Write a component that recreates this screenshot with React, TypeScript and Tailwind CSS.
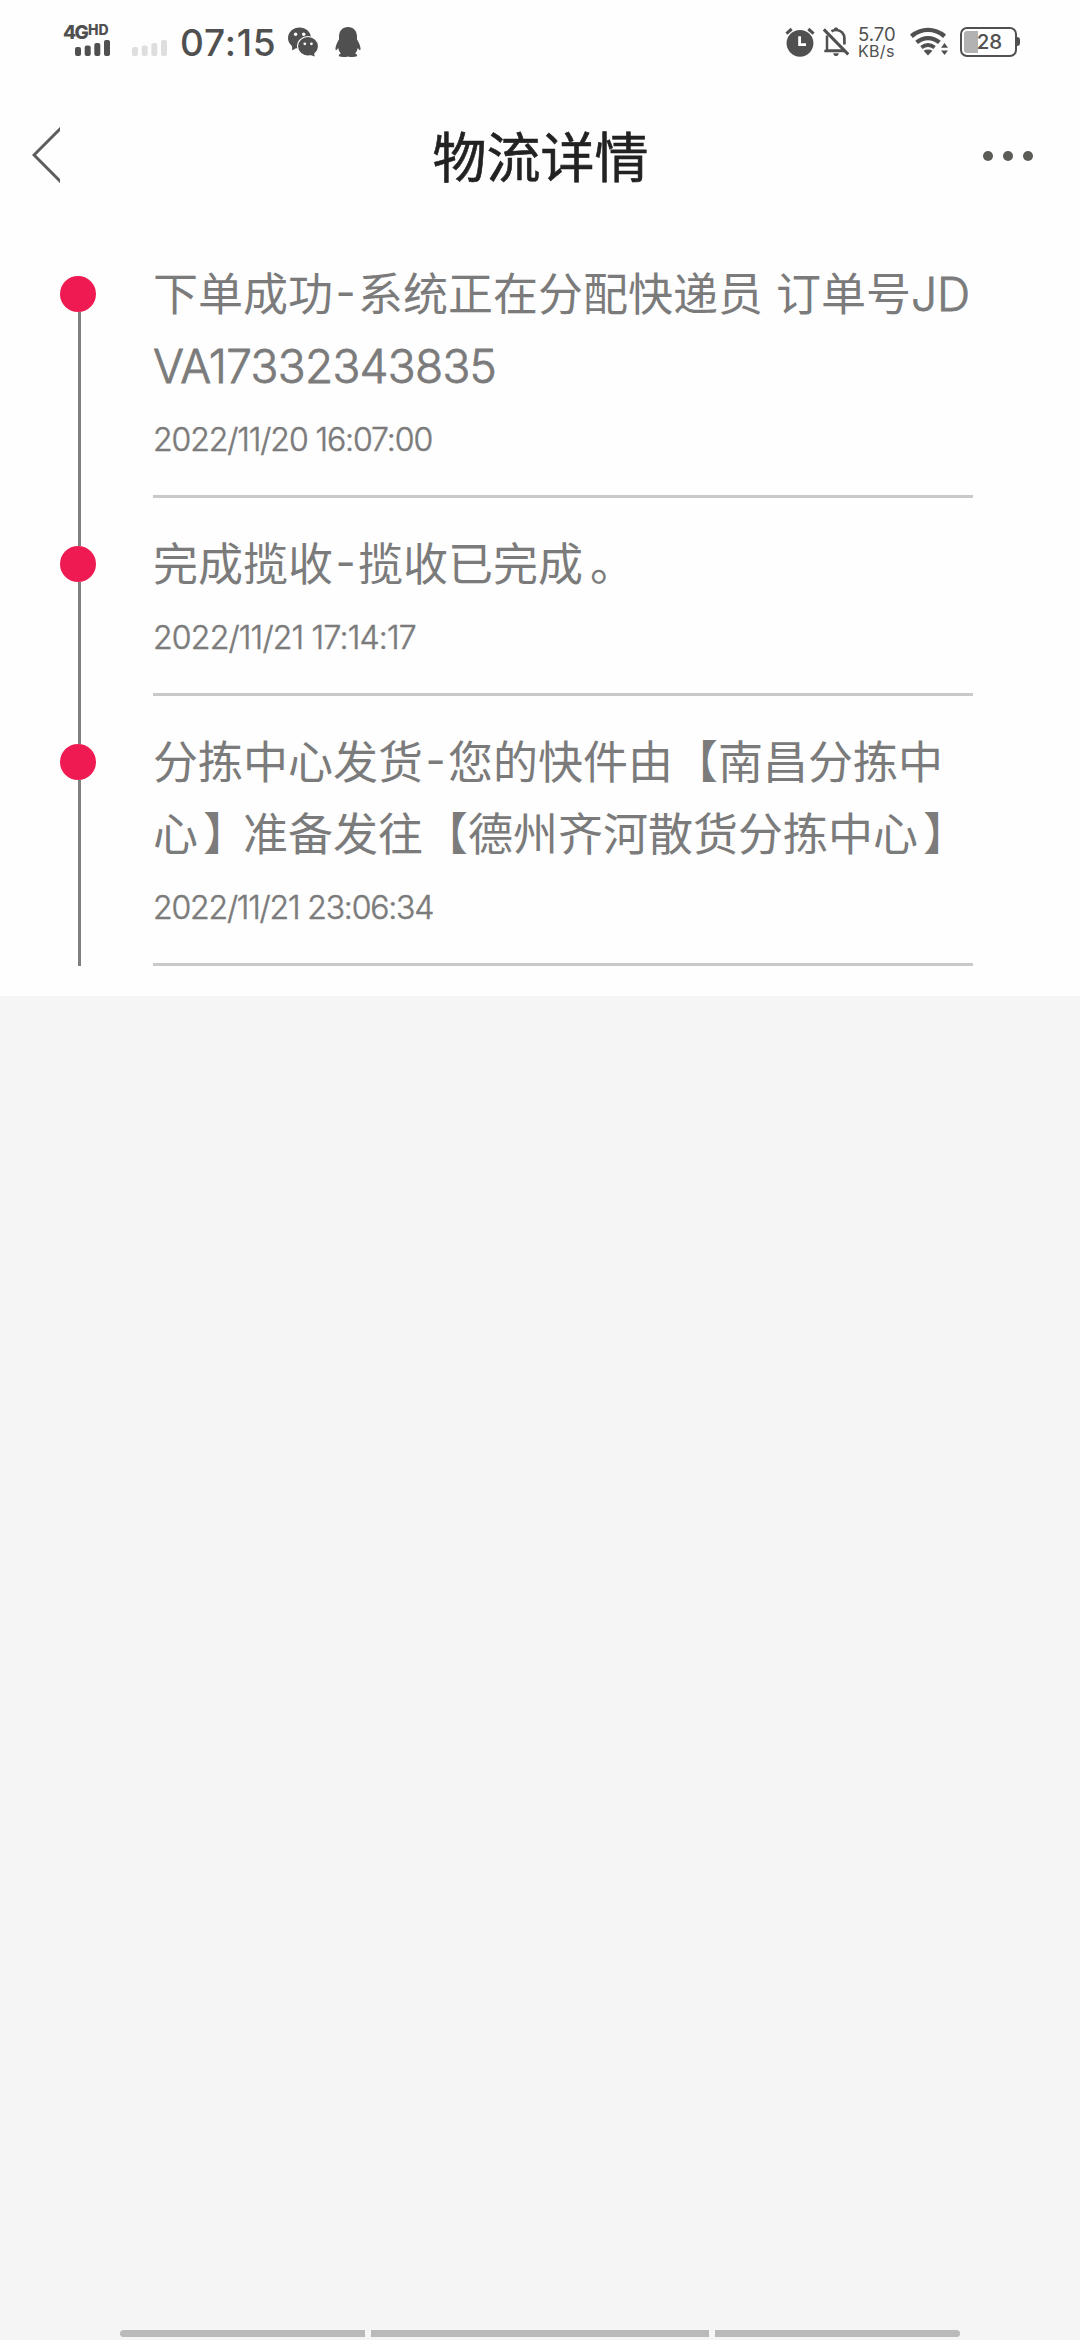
import React from 'react';

interface Segment {
  text: string;
  className?: string;
}

interface TrackRecord {
  lines: Segment[][];
  time: string;
  timeClass: string;
}

const HYPHEN: Segment = {
  text: '-',
  className: 'inline-block h-[72px] w-[25px] text-center align-top font-[Inter] text-[44px]',
};

const records: TrackRecord[] = [
  {
    lines: [
      [
        { text: '下单成功' },
        HYPHEN,
        { text: '系统正在分配快递员' },
        { text: ' ', className: 'inline-block w-[13px]' },
        { text: '订单号' },
        { text: 'JD', className: 'font-[Inter] text-[46px] font-light [-webkit-text-stroke:0.8px_#7b7b7b]' },
      ],
      [
        {
          text: 'VA17332343835',
          className: 'font-[Inter] text-[46px] font-light tracking-[-0.7px] [-webkit-text-stroke:0.8px_#7b7b7b]',
        },
      ],
    ],
    time: '2022/11/20 16:07:00',
    timeClass: 'tracking-[-1.1px]',
  },
  {
    lines: [[{ text: '完成揽收' }, HYPHEN, { text: '揽收已完成' }, { text: '。', className: 'ml-[7px]' }]],
    time: '2022/11/21 17:14:17',
    timeClass: 'tracking-[-0.8px]',
  },
  {
    lines: [
      [{ text: '分拣中心发货' }, HYPHEN, { text: '您的快件由【南昌分拣中' }],
      [
        { text: '心' },
        { text: '】', className: 'ml-[5px] tracking-[-5px]' },
        { text: '准备发往【德州齐河散货分拣中心' },
        { text: '】', className: 'ml-[5px] tracking-[-5px]' },
      ],
    ],
    time: '2022/11/21 23:06:34',
    timeClass: 'tracking-[-1.2px]',
  },
];

const SignalBars: React.FC<{ className?: string }> = ({ className }) => (
  <svg viewBox="0 0 35 16" className={className} fill="currentColor">
    <rect x="0" y="7" width="6" height="9" rx="2" />
    <rect x="9.7" y="5.5" width="6" height="10.5" rx="2" />
    <rect x="19.3" y="3" width="6" height="13" rx="2" />
    <rect x="29" y="0" width="6" height="16" rx="2" />
  </svg>
);

const WechatIcon = () => (
  <svg viewBox="0 0 30 30" className="h-[30px] w-[30px]">
    <ellipse cx="11.5" cy="11" rx="11.5" ry="10.6" fill="#505050" />
    <path d="M4 18L4.2 23.5L10 20Z" fill="#505050" />
    <circle cx="7.6" cy="7.2" r="1.7" fill="#fff" />
    <circle cx="15.7" cy="7.2" r="1.7" fill="#fff" />
    <ellipse cx="20" cy="19.3" rx="11" ry="10.4" fill="#fff" />
    <ellipse cx="20" cy="19.3" rx="9.9" ry="9.2" fill="#505050" />
    <path d="M21 27.5L26.7 29.6L26 25Z" fill="#505050" />
    <circle cx="16.8" cy="16.8" r="1.4" fill="#fff" />
    <circle cx="23.4" cy="16.8" r="1.4" fill="#fff" />
  </svg>
);

const QQIcon = () => (
  <svg viewBox="0 0 26 30" className="h-[30px] w-[26px]" fill="#505050">
    <path d="M13 0C7.5 0 4 4 4 9.5V12.5C2.3 15.2 .8 18.4 .5 21.2C.3 23.3 1.1 23.8 2.2 22.3L3.2 20.9C3.6 23 4.5 24.7 5.8 26.4C4.4 27 3.8 27.8 3.8 28.6C3.8 29.6 5.5 30 8 30C10.2 30 12 29.8 13 29.4C14 29.8 15.8 30 18 30C20.5 30 22.2 29.6 22.2 28.6C22.2 27.8 21.6 27 20.2 26.4C21.5 24.7 22.4 23 22.8 20.9L23.8 22.3C24.9 23.8 25.7 23.3 25.5 21.2C25.2 18.4 23.7 15.2 22 12.5V9.5C22 4 18.5 0 13 0Z" />
  </svg>
);

const AlarmIcon = () => (
  <svg viewBox="0 0 30 30" className="h-[30px] w-[30px]" fill="none">
    <circle cx="15" cy="16.3" r="13.4" fill="#505050" />
    <path d="M1.4 6.6L6.7 2M23.3 2L28.6 6.6" stroke="#505050" strokeWidth="3" />
    <path d="M14.6 9.3V17.6H21" stroke="#fff" strokeWidth="2.8" />
  </svg>
);

const BellOffIcon = () => (
  <svg viewBox="0 0 26 30" className="h-[30px] w-[26px]" fill="none" stroke="#505050">
    <path d="M.8 2.4L25.2 27.4" strokeWidth="3" />
    <path d="M4 8.5V23.6H19.5M1.3 23.9H21" strokeWidth="2.5" />
    <path d="M8.5 4.3C10 3.3 11.5 3 13 3C18 3 21.4 6.6 21.4 11.5V17.5" strokeWidth="2.7" />
    <path d="M10.2 26.3H15.8C15.5 28.2 14.6 29.1 13 29.1C11.4 29.1 10.5 28.2 10.2 26.3Z" fill="#505050" stroke="none" />
    <path d="M10.8 3C11 1 11.6 .5 13 .5C14.4 .5 15 1 15.2 3Z" fill="#505050" stroke="none" />
  </svg>
);

const WifiIcon = () => (
  <svg viewBox="0 0 38 30" className="h-[30px] w-[38px]" fill="none" stroke="#505050">
    <path d="M1.4 9.2C11.5 .8 24.5 .8 34.6 9.2" strokeWidth="4.4" />
    <path d="M6.6 15.3C13.5 9.6 22.5 9.6 29.4 15.3" strokeWidth="4.2" />
    <path d="M11.4 20.5C15.5 17.3 20.5 17.3 24.6 20.5" strokeWidth="3.8" />
    <path d="M13.6 23.8C16.2 22 19.8 22 22.4 23.8L18 28.6Z" fill="#505050" stroke="none" />
    <path d="M31 20.7L34.5 16L38 20.7ZM31 23.4H38L34.5 28Z" fill="#505050" stroke="none" />
  </svg>
);

const StatusBar = () => (
  <div className="flex h-[84px] items-start pl-[63px] pr-[60px] pt-[27px] font-[Inter] text-[#505050]">
    <div className="-mt-[2px] h-[31px] w-[47px]">
      <div className="flex h-[15px] items-start">
        <span className="w-[25px] text-[19px] leading-[16px] font-extrabold tracking-[-1.6px]">4G</span>
        <span className="text-[14px] leading-[10px] font-extrabold">HD</span>
      </div>
      <SignalBars className="ml-3 h-4 w-[35px]" />
    </div>
    <SignalBars className="ml-[22px] mt-[13px] h-4 w-[35px] text-[#dedede]" />
    <span className="ml-[13px] w-[108px] text-[37px] leading-[31px] font-medium tracking-[0.8px]">07:15</span>
    <WechatIcon />
    <div className="ml-[17px]">
      <QQIcon />
    </div>
    <div className="ml-auto flex items-start">
      <AlarmIcon />
      <div className="ml-2">
        <BellOffIcon />
      </div>
      <div className="ml-[9px] flex w-[38px] flex-col">
        <span className="text-[18.5px] leading-[15px]">5.70</span>
        <span className="text-[16px] leading-[18px] tracking-[0.3px]">KB/s</span>
      </div>
      <div className="ml-[14px]">
        <WifiIcon />
      </div>
      <div className="relative ml-3 flex h-[30px] w-[57px] items-center justify-center rounded-[7px] border-[2.5px] border-[#505050]">
        <div className="absolute left-[2px] top-[2px] h-[22px] w-[14px] rounded-l-[3px] bg-[#b2b2b2]" />
        <span className="relative pl-[2px] text-[20.5px] leading-[24px] font-medium">28</span>
      </div>
      <div className="mt-[10px] h-[9px] w-[3px] rounded-r-sm bg-[#505050]" />
    </div>
  </div>
);

const NavBar = () => (
  <div className="flex h-[150px] items-start justify-between pl-8 pr-[47px]">
    <svg viewBox="0 0 28 56" className="mt-[43px] h-14 w-7" fill="none" stroke="#5c5c5c" strokeWidth="3">
      <path d="M30 0L2 28L30 56" />
    </svg>
    <h1 className="ml-[38px] mt-[35px] text-[54px] leading-[72px] font-normal text-[#222] [-webkit-text-stroke:0.6px_#222]">物流详情</h1>
    <div className="mt-[67px] flex gap-[10px]">
      <span className="h-[10px] w-[10px] rounded-full bg-[#5b5c56]" />
      <span className="h-[10px] w-[10px] rounded-full bg-[#5b5c56]" />
      <span className="h-[10px] w-[10px] rounded-full bg-[#5b5c56]" />
    </div>
  </div>
);

const TimelineItem: React.FC<{ record: TrackRecord; first: boolean; last: boolean }> = ({ record, first, last }) => (
  <li className="flex">
    <div className="flex w-[153px] flex-col pl-[60px]">
      <div className={first ? 'ml-[18px] h-[18px] w-[3px]' : 'ml-[18px] h-[18px] w-[3px] bg-[#808080]'} />
      <div className="h-9 w-9 rounded-full bg-[#ee1a51]" />
      <div className={last ? 'mb-[30px] ml-[18px] w-[3px] flex-1 bg-[#808080]' : 'ml-[18px] w-[3px] flex-1 bg-[#808080]'} />
    </div>
    <div className="-mt-[2px] mb-[30px] w-[820px] border-b-[3px] border-[#c9c9c9] text-[#7b7b7b]">
      {record.lines.map((line, i) => (
        <p key={i} className="h-[72px] text-[45px] leading-[72px] whitespace-pre">
          {line.map((segment, j) => (
            <span key={j} className={segment.className}>
              {segment.text}
            </span>
          ))}
        </p>
      ))}
      <p className="h-[95px] pt-[4px] font-[Inter] text-[32px] leading-[72px] font-light whitespace-pre [-webkit-text-stroke:0.5px_#7b7b7b]">
        <span className={record.timeClass}>{record.time}</span>
      </p>
    </div>
  </li>
);

const App: React.FC = () => (
  <div className="flex h-[2340px] w-[1080px] flex-col overflow-hidden bg-[#f5f5f5] font-['Noto_Sans_CJK_SC',sans-serif]">
    <div className="h-[996px] bg-[#fefefe]">
      <StatusBar />
      <NavBar />
      <ul className="pt-6">
        {records.map((record, i) => (
          <TimelineItem key={record.time} record={record} first={i === 0} last={i === records.length - 1} />
        ))}
      </ul>
    </div>
    <div className="mt-auto mb-[3px] flex justify-center gap-[6px]">
      <div className="h-[7px] w-[245px] rounded-l-full bg-[#bababa]" />
      <div className="h-[7px] w-[338px] bg-[#bababa]" />
      <div className="h-[7px] w-[245px] rounded-r-full bg-[#bababa]" />
    </div>
  </div>
);

export default App;
